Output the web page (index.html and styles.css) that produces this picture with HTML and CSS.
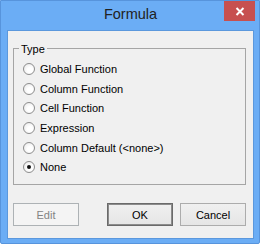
FILE: index.html
```html
<!DOCTYPE html>
<html lang="en">
<head>
  <meta charset="UTF-8" />
  <title>Formula</title>
  <link rel="stylesheet" href="styles.css">
</head>
<body>
  <div class="window">
    <div class="titlebar">
      <span class="title">Formula</span>
      <div class="close-btn">
        <svg width="10" height="9" viewBox="0 0 10 9">
          <path d="M1.5 1 L8.5 8 M8.5 1 L1.5 8" stroke="#fff" stroke-width="2" fill="none" />
        </svg>
      </div>
    </div>

    <div class="client">
      <div class="group">
        <span class="group-label">Type</span>
        <label class="radio-row"><span class="radio"></span>Global Function</label>
        <label class="radio-row"><span class="radio"></span>Column Function</label>
        <label class="radio-row"><span class="radio"></span>Cell Function</label>
        <label class="radio-row"><span class="radio"></span>Expression</label>
        <label class="radio-row"><span class="radio"></span>Column Default (&lt;none&gt;)</label>
        <label class="radio-row"><span class="radio checked"></span>None</label>
      </div>

      <div class="buttons">
        <button class="btn disabled">Edit</button>
        <button class="btn default">OK</button>
        <button class="btn">Cancel</button>
      </div>
    </div>
  </div>
</body>
</html>
```

FILE: styles.css
```css
body {
  margin: 0;
  background: #fff;
  font-family: "Liberation Sans", Arial, sans-serif;
  font-size: 11px;
  color: #000;
}

.window {
  position: relative;
  width: 260px;
  height: 244px;
  box-sizing: border-box;
  background: #6badf5;
  border: 1px solid #5794dc;
  border-radius: 0 0 2px 2px;
  padding: 0 5px 0 6px;
}

.titlebar {
  height: 29px;
  line-height: 27px;
  text-align: center;
}

.title {
  font-size: 14.5px;
  color: #222;
}

.close-btn {
  position: absolute;
  top: 0;
  right: 4px;
  width: 31px;
  height: 20px;
  background: #c75050;
  display: flex;
  align-items: center;
  justify-content: center;
}

.client {
  height: 209px;
  box-sizing: border-box;
  background: #f0f0f0;
  border: 1px solid #5b98dd;
  padding: 17px 7px 0 5px;
}

.group {
  position: relative;
  height: 137px;
  box-sizing: border-box;
  border: 1px solid #a5a5a5;
  padding: 10px 0 0 9px;
}

.group-label {
  position: absolute;
  top: -6px;
  left: 5px;
  padding: 0 2px;
  line-height: 13px;
  background: #f0f0f0;
}

.radio-row {
  display: flex;
  align-items: center;
  height: 19.7px;
}

.radio {
  width: 12px;
  height: 12px;
  box-sizing: border-box;
  border-radius: 50%;
  border: 1px solid #8d8d8d;
  background: radial-gradient(circle at 60% 60%, #fff 30%, #e4e4e4 100%);
  margin-right: 5px;
  position: relative;
}

.radio.checked::after {
  content: "";
  position: absolute;
  left: 3px;
  top: 3px;
  width: 4px;
  height: 4px;
  border-radius: 50%;
  background: #111;
}

.buttons {
  display: flex;
  gap: 7px;
  margin-top: 18px;
}

.btn {
  width: 66px;
  height: 23px;
  box-sizing: border-box;
  margin: 0;
  padding: 0;
  font-family: "Liberation Sans", Arial, sans-serif;
  font-size: 11px;
  color: #000;
  border: 1px solid #acacac;
  background: linear-gradient(#f0f0f0, #e5e5e5);
}

.btn.disabled {
  margin-right: auto;
  color: #838383;
  border-color: #adb2b5;
  background: #f4f4f4;
}

.btn.default {
  border-color: #6a6a6a;
  box-shadow: inset 0 0 0 1px #8c8c8c;
}
```
